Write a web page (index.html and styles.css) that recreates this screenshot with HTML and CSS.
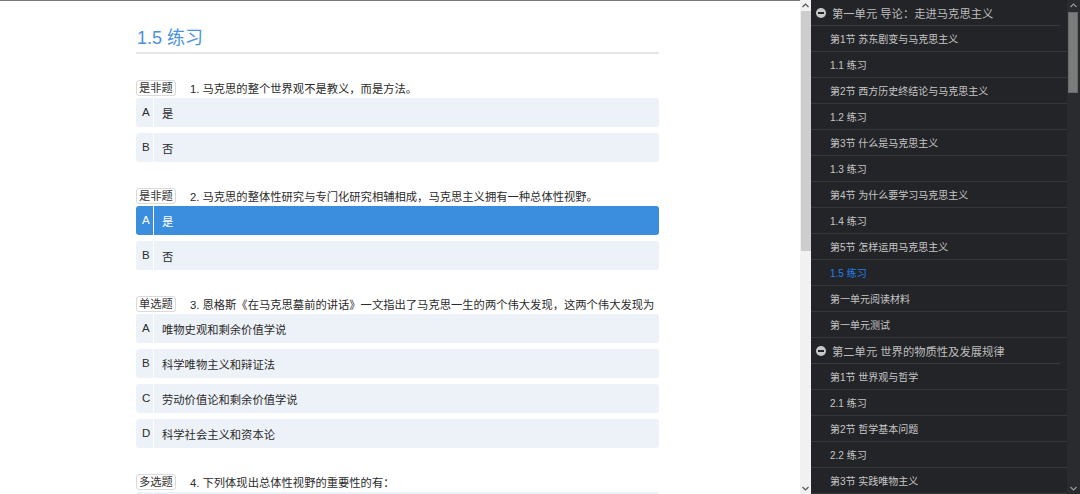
FILE: index.html
```html
<!DOCTYPE html>
<html lang="zh-CN">
<head>
<meta charset="utf-8">
<title>1.5 练习</title>
<link rel="stylesheet" href="styles.css">
</head>
<body>
<div class="page">
  <main class="main">
    <div class="content">
      <h1 class="title">1.5 练习</h1>

      <section class="question">
        <div class="q-head"><span class="tag">是非题</span><span class="q-text">1. 马克思的整个世界观不是教义，而是方法。</span></div>
        <div class="option"><span class="letter">A</span><span class="opt-text">是</span></div>
        <div class="option"><span class="letter">B</span><span class="opt-text">否</span></div>
      </section>

      <section class="question">
        <div class="q-head"><span class="tag">是非题</span><span class="q-text">2. 马克思的整体性研究与专门化研究相辅相成，马克思主义拥有一种总体性视野。</span></div>
        <div class="option selected"><span class="letter">A</span><span class="opt-text">是</span></div>
        <div class="option"><span class="letter">B</span><span class="opt-text">否</span></div>
      </section>

      <section class="question">
        <div class="q-head"><span class="tag">单选题</span><span class="q-text">3. 恩格斯《在马克思墓前的讲话》一文指出了马克思一生的两个伟大发现，这两个伟大发现为</span></div>
        <div class="option"><span class="letter">A</span><span class="opt-text">唯物史观和剩余价值学说</span></div>
        <div class="option"><span class="letter">B</span><span class="opt-text">科学唯物主义和辩证法</span></div>
        <div class="option"><span class="letter">C</span><span class="opt-text">劳动价值论和剩余价值学说</span></div>
        <div class="option"><span class="letter">D</span><span class="opt-text">科学社会主义和资本论</span></div>
      </section>

      <section class="question">
        <div class="q-head"><span class="tag">多选题</span><span class="q-text">4. 下列体现出总体性视野的重要性的有：</span></div>
        <div class="option"><span class="letter"></span><span class="opt-text"></span></div>
      </section>
    </div>
  </main>

  <div class="vscroll light">
    <div class="arrow up"><svg width="7" height="5" viewBox="0 0 7 5"><path d="M0.5 4 L3.5 1 L6.5 4" fill="none" stroke="#555" stroke-width="1.2"/></svg></div>
    <div class="track"><div class="thumb"></div></div>
    <div class="arrow down"><svg width="7" height="5" viewBox="0 0 7 5"><path d="M0.5 1 L3.5 4 L6.5 1" fill="none" stroke="#555" stroke-width="1.2"/></svg></div>
  </div>

  <nav class="sidebar">
    <div class="unit"><span class="minus"></span>第一单元 导论：走进马克思主义</div>
    <div class="item">第1节 苏东剧变与马克思主义</div>
    <div class="item">1.1 练习</div>
    <div class="item">第2节 西方历史终结论与马克思主义</div>
    <div class="item">1.2 练习</div>
    <div class="item">第3节 什么是马克思主义</div>
    <div class="item">1.3 练习</div>
    <div class="item">第4节 为什么要学习马克思主义</div>
    <div class="item">1.4 练习</div>
    <div class="item">第5节 怎样运用马克思主义</div>
    <div class="item active">1.5 练习</div>
    <div class="item">第一单元阅读材料</div>
    <div class="item">第一单元测试</div>
    <div class="unit"><span class="minus"></span>第二单元 世界的物质性及发展规律</div>
    <div class="item">第1节 世界观与哲学</div>
    <div class="item">2.1 练习</div>
    <div class="item">第2节 哲学基本问题</div>
    <div class="item">2.2 练习</div>
    <div class="item">第3节 实践唯物主义</div>
  </nav>

  <div class="vscroll dark">
    <div class="arrow up"><svg width="7" height="5" viewBox="0 0 7 5"><path d="M0.5 4 L3.5 1 L6.5 4" fill="none" stroke="#9a9a9a" stroke-width="1.2"/></svg></div>
    <div class="track"><div class="thumb"></div></div>
    <div class="arrow down"><svg width="7" height="5" viewBox="0 0 7 5"><path d="M0.5 1 L3.5 4 L6.5 1" fill="none" stroke="#9a9a9a" stroke-width="1.2"/></svg></div>
  </div>
</div>
</body>
</html>
```

FILE: styles.css
```css
* { box-sizing: border-box; }

html, body {
  margin: 0;
  padding: 0;
  background: #ffffff;
}

body {
  font-family: "Liberation Sans", "Noto Sans CJK SC", sans-serif;
  color: #333333;
}

.page {
  display: flex;
  width: 1080px;
  height: 494px;
  overflow: hidden;
}

.main {
  width: 800px;
  flex: none;
  height: 494px;
  overflow: hidden;
  border-top: 1px solid #7a7a7a;
  padding-left: 136px;
}

.content {
  width: 523px;
}

.title {
  margin: 0;
  padding: 25px 0 2px 1px;
  box-sizing: content-box;
  height: 24px;
  line-height: 24px;
  font-size: 18px;
  font-weight: normal;
  color: #4a93dd;
  border-bottom: 2px solid #e6e6e6;
}

.question {
  margin-top: 26px;
}

.q-head {
  display: flex;
  align-items: center;
  height: 16px;
  margin-bottom: 2px;
  font-size: 11.3px;
  color: #2b2b2b;
}

.tag {
  display: inline-block;
  height: 16px;
  line-height: 14px;
  padding: 0 2px;
  border: 1px solid #dadada;
  border-radius: 3px;
  background: #ffffff;
  color: #333333;
  margin-right: 14px;
  white-space: nowrap;
}

.q-text {
  white-space: nowrap;
}

.option {
  display: flex;
  align-items: stretch;
  height: 29px;
  margin-bottom: 6px;
  background: #edf1f8;
  border-radius: 3px;
  font-size: 11.3px;
  color: #2b2b2b;
}

.option .letter {
  width: 18px;
  flex: none;
  border-right: 1px solid #ffffff;
  display: flex;
  align-items: center;
  padding-left: 6px;
  padding-bottom: 2px;
  font-size: 11.5px;
}

.option .opt-text {
  display: flex;
  align-items: center;
  padding-left: 8px;
}

.option.selected {
  background: #3b8edd;
  color: #ffffff;
}

/* scrollbars */
.vscroll {
  flex: none;
  display: flex;
  flex-direction: column;
  height: 494px;
}

.vscroll .arrow {
  height: 11px;
  display: flex;
  align-items: center;
  justify-content: center;
  flex: none;
}

.vscroll .track {
  flex: 1;
  position: relative;
}

.vscroll .thumb {
  position: absolute;
}

.vscroll.light {
  width: 11px;
  background: #f1f1f1;
}

.vscroll.light .thumb {
  top: 0;
  height: 240px;
  background: #cdcdcd;
  left: 1px;
  right: 0;
}

.vscroll.dark {
  width: 13px;
  background: #2a2b2e;
}

.vscroll.dark .thumb {
  top: 1px;
  height: 81px;
  background: #7b7b7b;
  border: 1px solid #6a6a6a;
  left: 1px;
  right: 2px;
}

/* sidebar */
.sidebar {
  width: 256px;
  flex: none;
  height: 494px;
  overflow: hidden;
  background: #232427;
}

.unit,
.item {
  height: 26px;
  display: flex;
  align-items: center;
  white-space: nowrap;
}

.unit {
  position: relative;
  padding-left: 21px;
  font-size: 11.3px;
  color: #bdbdbd;
}

.unit::after {
  content: "";
  position: absolute;
  left: 0;
  right: 7px;
  bottom: 0;
  height: 1px;
  background: #3a3b3f;
}

.minus {
  position: absolute;
  left: 5px;
  top: 8px;
  width: 10px;
  height: 10px;
  border-radius: 50%;
  background: #c8c8c8;
}

.minus::before {
  content: "";
  position: absolute;
  left: 2px;
  right: 2px;
  top: 4px;
  height: 2px;
  background: #232427;
}

.item {
  padding-left: 19px;
  font-size: 10px;
  color: #c6c6c6;
  border-bottom: 1px solid #36373b;
}

.item.active {
  color: #1f80ec;
}
```
